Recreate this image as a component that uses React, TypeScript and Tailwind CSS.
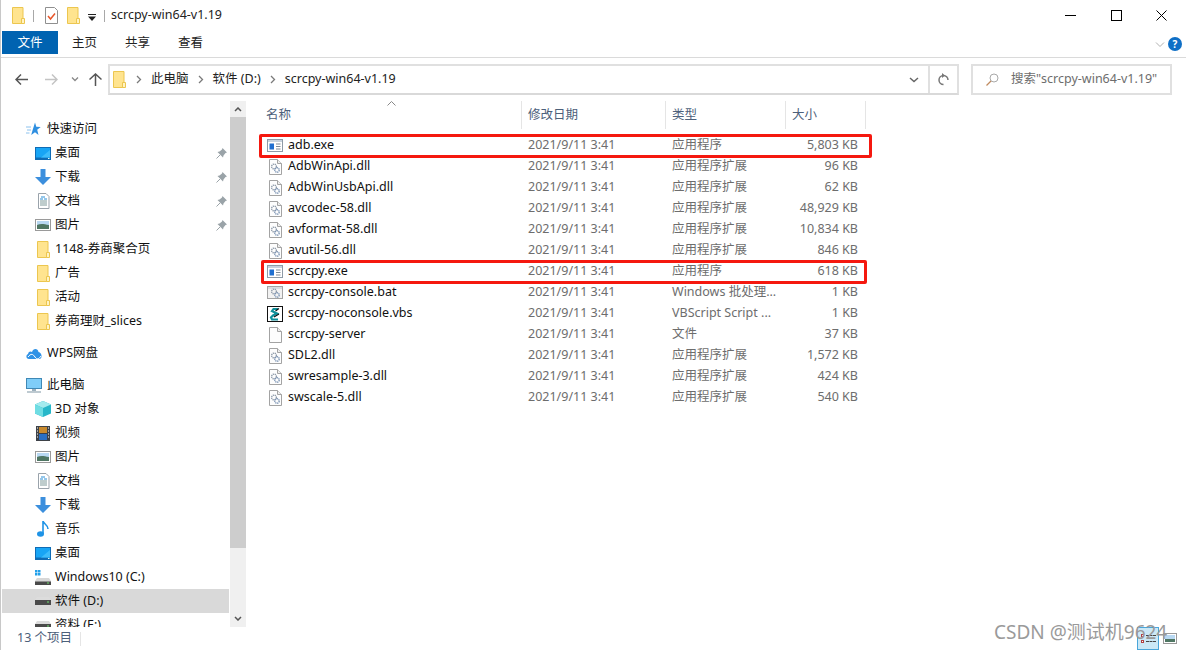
import type { ReactNode } from "react";

const files = [
  { name: "adb.exe", type: "应用程序", size: "5,803 KB", icon: "exe" },
  { name: "AdbWinApi.dll", type: "应用程序扩展", size: "96 KB", icon: "dll" },
  { name: "AdbWinUsbApi.dll", type: "应用程序扩展", size: "62 KB", icon: "dll" },
  { name: "avcodec-58.dll", type: "应用程序扩展", size: "48,929 KB", icon: "dll" },
  { name: "avformat-58.dll", type: "应用程序扩展", size: "10,834 KB", icon: "dll" },
  { name: "avutil-56.dll", type: "应用程序扩展", size: "846 KB", icon: "dll" },
  { name: "scrcpy.exe", type: "应用程序", size: "618 KB", icon: "exe" },
  { name: "scrcpy-console.bat", type: "Windows 批处理...", size: "1 KB", icon: "bat" },
  { name: "scrcpy-noconsole.vbs", type: "VBScript Script ...", size: "1 KB", icon: "vbs" },
  { name: "scrcpy-server", type: "文件", size: "37 KB", icon: "blank" },
  { name: "SDL2.dll", type: "应用程序扩展", size: "1,572 KB", icon: "dll" },
  { name: "swresample-3.dll", type: "应用程序扩展", size: "424 KB", icon: "dll" },
  { name: "swscale-5.dll", type: "应用程序扩展", size: "540 KB", icon: "dll" },
];

function Folder() {
  return (
    <svg width="13" height="17" viewBox="0 0 13 17">
      <path d="M.5.5h10.5v16H.5z" fill="#ffe48f" stroke="#ecc64f" />
      <path d="M9.5 16.5v-5h3v5z" fill="#fff3c4" stroke="#ecc64f" />
    </svg>
  );
}

function Page({ children }: { children?: ReactNode }) {
  return (
    <svg width="13" height="16" viewBox="0 0 13 16">
      <path d="M.5.5h8l4 4v11H.5z" fill="#fdfdfd" stroke="#a3a3a3" />
      <path d="M8.5.5v4h4" fill="#eee" stroke="#a3a3a3" />
      {children}
    </svg>
  );
}

function Gears({ cx = 6, cy = 8 }: { cx?: number; cy?: number }) {
  return (
    <g fill="none">
      <circle cx={cx - 1} cy={cy - 1.5} r="2.4" stroke="#8d99a8" strokeWidth="1.4" strokeDasharray="1.2 .6" />
      <circle cx={cx + 2} cy={cy + 2} r="2.2" stroke="#7c94b4" strokeWidth="1.4" strokeDasharray="1.2 .6" />
    </g>
  );
}

function FileIcon({ kind }: { kind: string }) {
  if (kind === "exe")
    return (
      <svg width="16" height="14" viewBox="0 0 16 14">
        <rect x=".5" y=".5" width="15" height="12" fill="#fff" stroke="#8e9aa6" />
        <rect x="1" y="1" width="14" height="2" fill="#c7d3df" />
        <rect x="2.5" y="4.5" width="4.5" height="6" fill="#1f6fd0" />
        <path d="M9 5h4.5M9 7.500h4.500M9 10h4.500" stroke="#7d8a97" />
      </svg>
    );
  if (kind === "bat")
    return (
      <svg width="16" height="14" viewBox="0 0 16 14">
        <rect x=".5" y=".5" width="15" height="12" fill="#f2f2f2" stroke="#a3a3a3" />
        <rect x="1" y="1" width="14" height="2" fill="#d8dde2" />
        <Gears cx={8} cy={7} />
      </svg>
    );
  if (kind === "vbs")
    return (
      <svg width="16" height="16" viewBox="0 0 16 16">
        <rect x=".5" y=".5" width="15" height="15" fill="#fff" stroke="#111" />
        <path d="M11 3H6.500L5 5l5 2.500L6 9.500l-2 2 1 2h6" fill="none" stroke="#0f8f9a" strokeWidth="2.200" />
        <path d="M12 2.500 8.500 5M12 8 7 11" stroke="#111" strokeWidth="1.200" />
      </svg>
    );
  if (kind === "blank") return <Page />;
  return (
    <Page>
      <Gears cx={6} cy={9} />
    </Page>
  );
}

function NavIcon({ kind }: { kind: string }) {
  switch (kind) {
    case "star":
      return (
        <svg width="15" height="14" viewBox="0 0 15 14">
          <path d="m9 .5 1.300 4.300 4.400.2-3.500 2.700L12.500 13 9 10.300 5.200 13l1.200-4.300z" fill="#2f8fe0" />
          <path d="M0 5h5M1 8h4M0 11h3.500" stroke="#8cc2ee" />
        </svg>
      );
    case "desktop":
      return (
        <svg width="16" height="13" viewBox="0 0 16 13">
          <rect width="16" height="13" fill="#0f6cb5" />
          <rect x="1" y="1" width="14" height="9.500" fill="#18a5f5" />
          <path d="M6 10.500 15 3v7.500z" fill="#3dbcfb" />
          <rect x="13" y="11" width="1.500" height="1" fill="#dff" />
        </svg>
      );
    case "download":
      return (
        <svg width="16" height="16" viewBox="0 0 16 16">
          <path d="M5.500 0h5v8H16l-8 8-8-8h5.500z" fill="#3c8fdd" />
        </svg>
      );
    case "doc":
      return (
        <svg width="13" height="16" viewBox="0 0 13 16">
          <path d="M1.500.5h7.500l3 3v12H1.500z" fill="#fff" stroke="#9aa3ab" />
          <path d="M4 4h4M3 6h3M7 6h3" stroke="#2a8fd6" />
          <path d="M3 8h7M3 10h7M3 12h7" stroke="#7f9a9a" />
        </svg>
      );
    case "image":
      return (
        <svg width="16" height="12" viewBox="0 0 16 12">
          <rect x=".5" y=".5" width="15" height="11" fill="#fff" stroke="#9a9a9a" />
          <rect x="2" y="2" width="12" height="4" fill="#b8d8f2" />
          <path d="M2 6c3-1.500 6-1.500 12 0v4H2z" fill="#4f7663" />
        </svg>
      );
    case "folder":
      return <Folder />;
    case "cloud":
      return (
        <svg width="16" height="11" viewBox="0 0 16 11">
          <path d="M3 11C0 11-.5 7 2 6c.5-3 3-3 4-2C7 0 12 0 12.500 4c3.500.5 4.500 7 .5 7z" fill="#2f92e6" />
          <path d="M2 9c3-4 5-3 7 0s4 2 6-1" stroke="#fff" fill="none" />
        </svg>
      );
    case "pc":
      return (
        <svg width="16" height="15" viewBox="0 0 16 15">
          <rect x=".5" y=".5" width="15" height="10" fill="#7fcdf8" stroke="#3f88b5" />
          <path d="M6 11h4v2H6z" fill="#9db0bd" />
          <path d="M1 14h14" stroke="#a9b8c2" strokeWidth="1.500" />
        </svg>
      );
    case "cube":
      return (
        <svg width="16" height="16" viewBox="0 0 16 16">
          <path d="M8 0 16 3.500v9L8 16 0 12.500v-9z" fill="#27b7c9" />
          <path d="M8 0 16 3.500 8 7 0 3.500z" fill="#a4ebee" />
          <path d="M0 3.500 8 7v9L0 12.500z" fill="#6fdde3" />
        </svg>
      );
    case "video":
      return (
        <svg width="14" height="15" viewBox="0 0 14 15">
          <rect width="14" height="15" fill="#3e4248" />
          <rect x="3" y="1" width="8" height="6" fill="#c98a2d" />
          <rect x="3" y="8" width="8" height="6" fill="#2b6fc2" />
          <path d="M1 2h1M1 5h1M1 8h1M1 11h1M12 2h1M12 5h1M12 8h1M12 11h1" stroke="#fff" />
        </svg>
      );
    case "music":
      return (
        <svg width="12" height="16" viewBox="0 0 12 16">
          <ellipse cx="3.500" cy="13" rx="3.500" ry="2.800" fill="#1e93e6" />
          <path d="M6 13V0c.5 3 5 3.500 5 8" fill="none" stroke="#1e93e6" strokeWidth="1.600" />
        </svg>
      );
    case "winDrive":
      return (
        <svg width="16" height="15" viewBox="0 0 16 15">
          <path d="M0 0h2.500v2.500H0zM3 0h2.500v2.500H3zM0 3h2.500v2.500H0zM3 3h2.500v2.500H3z" fill="#22a0ea" />
          <path d="M2 8h12l2 3v4H0v-4z" fill="#d7d7d7" />
          <rect y="11.500" width="16" height="3.500" fill="#4a4a4a" />
          <rect x="12" y="12.500" width="2" height="1" fill="#6fe06f" />
        </svg>
      );
    case "drive":
      return (
        <svg width="16" height="8" viewBox="0 0 16 8">
          <path d="M2 0h12l2 3H0z" fill="#dcdcdc" />
          <rect y="3" width="16" height="5" fill="#4a4a4a" />
          <rect x="12" y="4.500" width="2" height="1" fill="#6fe06f" />
        </svg>
      );
    default:
      return null;
  }
}

function Pin() {
  return (
    <svg width="11" height="11" viewBox="0 0 11 11">
      <path d="M6.500 0 11 4.500 9.500 5 7.500 7.500 7 9.500 1.500 4 3.500 3.500 6 1.500z" fill="#9aa3a8" />
      <path d="M4 7 .5 10.500" stroke="#9aa3a8" />
    </svg>
  );
}

function NavHead({ icon, label }: { icon: string; label: string }) {
  return (
    <div className="flex h-6 items-center pl-6">
      <div className="flex w-[21px] justify-start">
        <NavIcon kind={icon} />
      </div>
      <span>{label}</span>
    </div>
  );
}

function NavItem({ icon, label, pinned, selected }: { icon: string; label: string; pinned?: boolean; selected?: boolean }) {
  return (
    <div className={`flex h-6 items-center pl-8 pr-[2px] ${selected ? "bg-[#d9d9d9]" : ""}`}>
      <div className="flex w-[21px] justify-center pr-[3px]">
        <NavIcon kind={icon} />
      </div>
      <span className="flex-1 whitespace-nowrap">{label}</span>
      {pinned && <Pin />}
    </div>
  );
}

function Crumb() {
  return (
    <svg width="6" height="9" viewBox="0 0 6 9" className="shrink-0">
      <path d="m1 1 3.500 3.500L1 8" fill="none" stroke="#7a7a7a" strokeWidth="1.300" />
    </svg>
  );
}

function HeadCell({ label, className }: { label: string; className: string }) {
  return <div className={`flex h-[28px] items-center border-r border-[#e5e5e5] pl-[6px] text-[#4c607a] ${className}`}>{label}</div>;
}

export default function App() {
  return (
    <div
      className="relative flex h-[650px] w-[1186px] flex-col overflow-hidden border-l border-[#c8c8c8] bg-white text-[12.500px] text-[#111]"
      style={{ fontFamily: '"Noto Sans", "Noto Sans CJK SC", sans-serif' }}
    >
      {/* title bar */}
      <div className="flex h-[31px] shrink-0 items-center pl-[11px]">
        <Folder />
        <div className="ml-2 mr-[11px] h-[12px] w-px bg-[#a8a8a8]" />
        <svg width="13" height="17" viewBox="0 0 13 17">
          <path d="M.5.500h9l3 3v13H.5z" fill="#fff" stroke="#8f8f8f" />
          <path d="m3 9 2.500 3L10 6.500" fill="none" stroke="#e8562a" strokeWidth="1.500" />
        </svg>
        <div className="ml-[9px]">
          <Folder />
        </div>
        <svg width="8" height="7" viewBox="0 0 8 7" className="ml-2 mt-[4px]">
          <path d="M0 0h8v1H0zM0 2.500h8L4 7z" fill="#222" />
        </svg>
        <div className="ml-2 mr-[7px] h-[12px] w-px bg-[#a8a8a8]" />
        <span className="ml-[-1px] text-[#222]">scrcpy-win64-v1.19</span>
        <div className="ml-auto flex items-center">
          <div className="mr-[35px] h-px w-[11px] bg-black" />
          <div className="mr-[34px] h-[11px] w-[11px] border border-black" />
          <svg width="11" height="11" viewBox="0 0 11 11" className="mr-[19px]">
            <path d="m.5.500 10 10M10.500.500l-10 10" stroke="#000" />
          </svg>
        </div>
      </div>

      {/* ribbon tabs */}
      <div className="flex h-[27px] shrink-0 items-start border-b border-[#dadada] pl-px text-[#222]">
        <div className="flex h-[23px] w-[56px] items-center justify-center bg-[#0063b1] pt-[2px] text-white">文件</div>
        <div className="flex h-[23px] w-[53px] items-center justify-center pt-[2px]">主页</div>
        <div className="flex h-[23px] w-[53px] items-center justify-center pt-[2px]">共享</div>
        <div className="flex h-[23px] w-[53px] items-center justify-center pt-[2px]">查看</div>
        <svg width="10" height="6" viewBox="0 0 10 6" className="ml-auto mr-[3px] mt-[11px]">
          <path d="m1 .5 4 4 4-4" fill="none" stroke="#b0b0b0" />
        </svg>
        <div className="mr-[4px] mt-[6px] flex h-[14px] w-[14px] items-center justify-center rounded-full bg-[#0f6fc6] text-[10px] font-bold text-white">?</div>
      </div>

      {/* address row */}
      <div className="flex h-[43px] shrink-0 items-center pb-[6px] pt-[6px]">
        <div className="flex w-[107px] items-center pl-[14px]">
          <svg width="13" height="11" viewBox="0 0 13 11">
            <path d="M6 .5 1 5.500l5 5M1 5.500h12" fill="none" stroke="#555" strokeWidth="1.500" />
          </svg>
          <svg width="13" height="11" viewBox="0 0 13 11" className="ml-[17px]">
            <path d="M7 .5l5 5-5 5M12 5.500H0" fill="none" stroke="#c4c4c4" strokeWidth="1.500" />
          </svg>
          <svg width="8" height="5" viewBox="0 0 8 5" className="ml-[13px]">
            <path d="m1 .5 3 3 3-3" fill="none" stroke="#888" strokeWidth="1.300" />
          </svg>
          <svg width="13" height="13" viewBox="0 0 13 13" className="ml-[10px]">
            <path d="m.5 6.500 6-5.500 6 5.500M6.500 1v12" fill="none" stroke="#555" strokeWidth="1.500" />
          </svg>
        </div>
        <div className="flex h-[31px] w-[851px] items-center border-2 border-[#e0e0e0] border-b-[#d9d9d9] pl-[3px] text-[#222]">
          <Folder />
          <div className="ml-[10px] flex flex-1 items-center gap-[9px] pb-[1px]">
            <Crumb />
            <span>此电脑</span>
            <Crumb />
            <span>软件 (D:)</span>
            <Crumb />
            <span>scrcpy-win64-v1.19</span>
          </div>
          <svg width="10" height="6" viewBox="0 0 10 6" className="mr-[9px]">
            <path d="m1 1 4 3.500L9 1" fill="none" stroke="#666" strokeWidth="1.500" />
          </svg>
          <div className="flex h-full w-[29px] items-center justify-center border-l-2 border-[#e0e0e0]">
            <svg width="13" height="13" viewBox="0 0 13 13">
              <path d="M6.500 2.500a4.500 4.500 0 1 0 4.500 4.500" fill="none" stroke="#777" strokeWidth="1.500" transform="rotate(90 6.500 7)" />
              <path d="M5 0v5l3-2.500z" fill="#777" />
            </svg>
          </div>
        </div>
        <div className="ml-3 flex h-[31px] w-[201px] items-center border-2 border-[#e0e0e0] pl-[13px] text-[#6d6d6d]">
          <svg width="13" height="13" viewBox="0 0 13 13">
            <circle cx="8" cy="5" r="4" fill="none" stroke="#a9a9a9" />
            <path d="M5 8 .5 12.500" stroke="#c08a5e" strokeWidth="1.200" />
          </svg>
          <span className="ml-[12px] whitespace-nowrap pb-[1px]">搜索"scrcpy-win64-v1.19"</span>
        </div>
      </div>

      {/* body */}
      <div className="flex min-h-0 flex-1">
        <div className="flex w-[245px] shrink-0 pl-px">
          <div className="mr-px w-[227px] overflow-hidden pt-4 text-[#111]">
            <NavHead icon="star" label="快速访问" />
            <NavItem icon="desktop" label="桌面" pinned />
            <NavItem icon="download" label="下载" pinned />
            <NavItem icon="doc" label="文档" pinned />
            <NavItem icon="image" label="图片" pinned />
            <NavItem icon="folder" label="1148-券商聚合页" />
            <NavItem icon="folder" label="广告" />
            <NavItem icon="folder" label="活动" />
            <NavItem icon="folder" label="券商理财_slices" />
            <div className="h-2" />
            <NavHead icon="cloud" label="WPS网盘" />
            <div className="h-2" />
            <NavHead icon="pc" label="此电脑" />
            <NavItem icon="cube" label="3D 对象" />
            <NavItem icon="video" label="视频" />
            <NavItem icon="image" label="图片" />
            <NavItem icon="doc" label="文档" />
            <NavItem icon="download" label="下载" />
            <NavItem icon="music" label="音乐" />
            <NavItem icon="desktop" label="桌面" />
            <NavItem icon="winDrive" label="Windows10 (C:)" />
            <NavItem icon="drive" label="软件 (D:)" selected />
            <NavItem icon="drive" label="资料 (E:)" />
          </div>
          <div className="flex w-4 flex-col bg-[#f0f0f0]">
            <div className="flex h-4 items-center justify-center">
              <svg width="8" height="5" viewBox="0 0 8 5">
                <path d="m1 4 3-3 3 3" fill="none" stroke="#555" strokeWidth="1.500" />
              </svg>
            </div>
            <div className="h-[431px] bg-[#cdcdcd]" />
            <div className="mt-auto flex h-[17px] items-center justify-center">
              <svg width="8" height="5" viewBox="0 0 8 5">
                <path d="m1 1 3 3 3-3" fill="none" stroke="#555" strokeWidth="1.500" />
              </svg>
            </div>
          </div>
        </div>

        <div className="relative flex-1 pl-[14px]">
          <svg width="9" height="5" viewBox="0 0 9 5" className="absolute left-[141px] top-0">
            <path d="m.5 4.500 4-4 4 4" fill="none" stroke="#888" />
          </svg>
          <div className="flex">
            <HeadCell label="名称" className="w-[262px]" />
            <HeadCell label="修改日期" className="w-[144px]" />
            <HeadCell label="类型" className="w-[120px]" />
            <HeadCell label="大小" className="w-[80px]" />
          </div>
          <div className="pt-[6px]">
            {files.map((file) => (
              <div key={file.name} className="flex h-[21px] items-center">
                <div className="flex w-[262px] items-center">
                  <div className="flex w-[28px] justify-center pl-[2px]">
                    <FileIcon kind={file.icon} />
                  </div>
                  <span className="text-[#111]">{file.name}</span>
                </div>
                <div className="w-[144px] pl-[6px] text-[#6d6d6d]">2021/9/11 3:41</div>
                <div className="w-[120px] whitespace-nowrap pl-[6px] text-[#6d6d6d]">{file.type}</div>
                <div className="w-[72px] text-right text-[#6d6d6d]">{file.size}</div>
              </div>
            ))}
          </div>
        </div>
      </div>

      {/* status bar */}
      <div className="flex h-[23px] shrink-0 items-center pl-4 text-[#4c607a]">
        <span className="w-[63px]">13 个项目</span>
        <div className="h-[14px] w-px bg-[#e5e5e5]" />
        <div className="ml-auto mr-[9px] flex items-center gap-1">
          <div className="flex h-[23px] w-[22px] flex-col justify-center gap-[3px] border border-[#4aa6da] bg-[#cbe8f6] pl-[3px]">
            <div className="flex items-center gap-[2px]">
              <div className="h-[3px] w-[3px] border border-[#b04040] bg-white" />
              <div className="h-px w-[10px] border-b border-dashed border-[#444]" />
            </div>
            <div className="flex items-center gap-[2px]">
              <div className="h-[3px] w-[3px] border border-[#b04040] bg-white" />
              <div className="h-px w-[10px] border-b border-dashed border-[#444]" />
            </div>
          </div>
          <svg width="14" height="11" viewBox="0 0 14 11">
            <rect x=".5" y=".5" width="13" height="10" fill="#fff" stroke="#999" />
            <rect x="2" y="2" width="10" height="4" fill="#b8d8f2" />
            <rect x="2" y="6" width="10" height="3" fill="#4f7663" />
          </svg>
        </div>
      </div>

      {/* annotations on the screenshot */}
      <div className="absolute left-[258px] top-[134px] h-[24px] w-[613px] rounded-[2px] border-[3px] border-[#f5180f]" />
      <div className="absolute left-[260px] top-[260px] h-[24px] w-[606px] rounded-[2px] border-[3px] border-[#f5180f]" />
      <div className="absolute left-[993px] top-[618px] whitespace-nowrap text-[19px] text-[#9a9a9a]">CSDN @测试机9624</div>
    </div>
  );
}
